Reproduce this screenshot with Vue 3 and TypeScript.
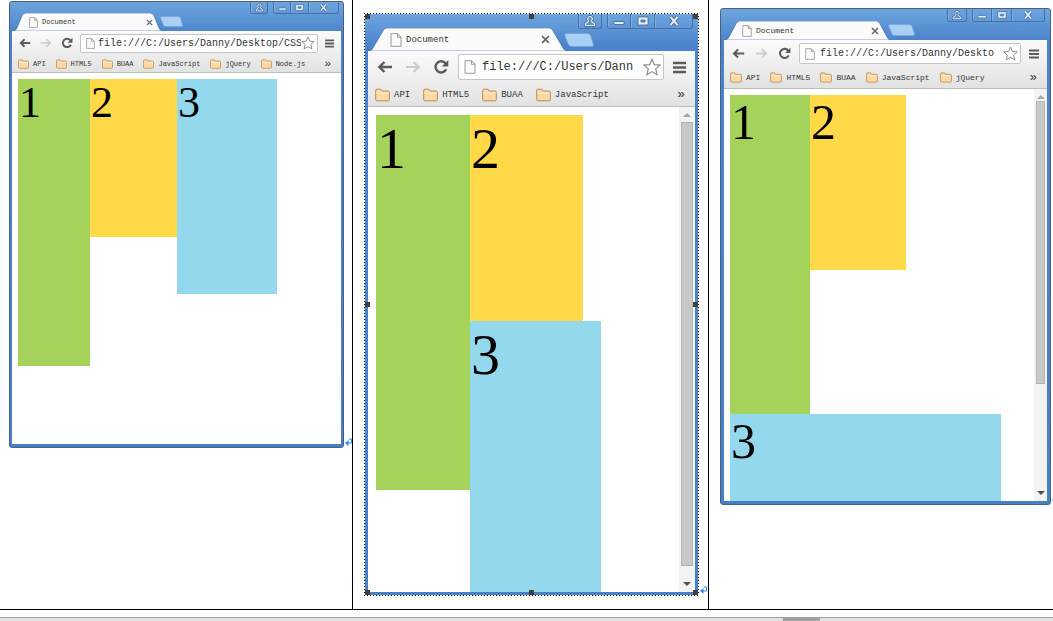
<script setup lang="ts">
interface FloatBox {
  label: string
  tone: 'green' | 'yellow' | 'blue'
}

interface BrowserWindow {
  id: string
  size: 'small' | 'large' | 'medium'
  url: string
  bookmarks: string[]
  selected: boolean
  scroll: boolean
  tabWidth: number
  tabHeight: number
  slant: number
}

const boxes: FloatBox[] = [
  { label: '1', tone: 'green' },
  { label: '2', tone: 'yellow' },
  { label: '3', tone: 'blue' },
]

const windows: BrowserWindow[] = [
  {
    id: 'wide',
    size: 'small',
    url: 'file:///C:/Users/Danny/Desktop/CSS',
    bookmarks: ['API', 'HTML5', 'BUAA', 'JavaScript', 'jQuery', 'Node.js'],
    selected: false,
    scroll: false,
    tabWidth: 152,
    tabHeight: 18,
    slant: 11,
  },
  {
    id: 'narrow',
    size: 'large',
    url: 'file:///C:/Users/Dann',
    bookmarks: ['API', 'HTML5', 'BUAA', 'JavaScript'],
    selected: true,
    scroll: true,
    tabWidth: 200,
    tabHeight: 23,
    slant: 16,
  },
  {
    id: 'dropped',
    size: 'medium',
    url: 'file:///C:/Users/Danny/Deskto',
    bookmarks: ['API', 'HTML5', 'BUAA', 'JavaScript', 'jQuery'],
    selected: false,
    scroll: true,
    tabWidth: 168,
    tabHeight: 19,
    slant: 13,
  },
]

const handles = ['nw', 'n', 'ne', 'w', 'e', 'sw', 's', 'se']

function tabPath(w: number, h: number, s: number): string {
  return `M0 ${h}Q4 ${h} 5 ${h - 3}L${s - 1} 3Q${s} 0 ${s + 3} 0H${w - s - 3}Q${w - s} 0 ${w - s + 1} 3L${w - 5} ${h - 3}Q${w - 4} ${h} ${w} ${h}Z`
}
</script>

<template>
  <main class="page">
    <div class="row">
      <section v-for="win in windows" :key="win.id" class="cell" :class="win.size">
        <div class="frame" :class="{ selected: win.selected }">
          <article class="window">
            <header class="titlebar">
              <div class="tab">
                <svg
                  class="tab-shape"
                  :viewBox="`0 0 ${win.tabWidth} ${win.tabHeight}`"
                  preserveAspectRatio="none"
                  aria-hidden="true"
                >
                  <path :d="tabPath(win.tabWidth, win.tabHeight, win.slant)" fill="#fbfbfb" stroke="#3c6ca8" stroke-width="0.6" />
                </svg>
                <svg class="page-icon" viewBox="0 0 12 14" aria-hidden="true">
                  <path d="M1 .7H7.5L11 4.2V13.3H1ZM7.5.7V4.2H11" fill="#fafafa" stroke="#999" />
                </svg>
                <span class="tab-title">Document</span>
                <button class="tab-close" type="button" aria-label="Close tab">
                  <svg viewBox="0 0 8 8"><path d="M1 1L7 7M7 1L1 7" stroke="#666" stroke-width="1.5" /></svg>
                </button>
              </div>
              <button class="new-tab" type="button" aria-label="New tab">
                <svg viewBox="0 0 28 13" preserveAspectRatio="none">
                  <path d="M2 .5H22Q24 .5 25 2.500L27.500 11Q28 12.500 26 12.500H7Q5 12.500 4 10.500L.6 2Q.2.5 2 .5Z" fill="#a9cff5" stroke="#79a5d6" stroke-width="0.8" />
                </svg>
              </button>
              <div class="controls">
                <button class="ctl user" type="button" aria-label="User">
                  <svg viewBox="0 0 12 12">
                    <path d="M6 1.500a2.300 2.300 0 0 1 1.600 4L8 7L10.500 8.500V10.500H1.500V8.500L4 7L4.400 5.500A2.300 2.300 0 0 1 6 1.500Z" fill="none" stroke="#3b5f8c" stroke-width="2.400" />
                    <path d="M6 1.500a2.300 2.300 0 0 1 1.600 4L8 7L10.500 8.500V10.500H1.500V8.500L4 7L4.400 5.500A2.300 2.300 0 0 1 6 1.500Z" fill="#5f8cc2" stroke="#e6f0fb" stroke-width="1.200" />
                  </svg>
                </button>
                <div class="group">
                  <button class="ctl" type="button" aria-label="Minimize">
                    <svg viewBox="0 0 12 12"><rect x="1" y="6.500" width="10" height="3" rx="0.500" fill="#e6f0fb" stroke="#3b5f8c" stroke-width="0.800" /></svg>
                  </button>
                  <button class="ctl" type="button" aria-label="Maximize">
                    <svg viewBox="0 0 12 12"><path d="M1 2H11V10H1ZM4 5V7H8V5Z" fill="#e6f0fb" fill-rule="evenodd" stroke="#3b5f8c" stroke-width="0.800" /></svg>
                  </button>
                  <button class="ctl close" type="button" aria-label="Close">
                    <svg viewBox="0 0 12 12">
                      <path d="M2.500 2L9.500 10M9.500 2L2.500 10" stroke="#3b5f8c" stroke-width="3.600" />
                      <path d="M2.500 2L9.500 10M9.500 2L2.500 10" stroke="#e6f0fb" stroke-width="2" />
                    </svg>
                  </button>
                </div>
              </div>
            </header>

            <div class="chrome">
              <div class="toolbar">
                <nav class="nav">
                  <button type="button" aria-label="Back">
                    <svg viewBox="0 0 16 16"><path d="M15 8H2.500M7.500 3L2.300 8L7.500 13" fill="none" stroke="#5c5c5c" stroke-width="2.400" /></svg>
                  </button>
                  <button type="button" aria-label="Forward">
                    <svg viewBox="0 0 16 16"><path d="M1 8H13.500M8.500 3L13.700 8L8.500 13" fill="none" stroke="#cbcbcb" stroke-width="2.200" /></svg>
                  </button>
                  <button type="button" aria-label="Reload">
                    <svg viewBox="0 0 16 16">
                      <path d="M12.600 4.500A5.600 5.600 0 1 0 13.200 10.300" fill="none" stroke="#5c5c5c" stroke-width="2.500" />
                      <path d="M15.300 1V7.500H8.800Z" fill="#5c5c5c" />
                    </svg>
                  </button>
                </nav>
                <div class="omnibox">
                  <svg class="page-icon" viewBox="0 0 12 14" aria-hidden="true">
                    <path d="M1 .7H7.500L11 4.200V13.300H1ZM7.500.7V4.200H11" fill="#fafafa" stroke="#999" />
                  </svg>
                  <input type="text" :value="win.url" aria-label="Address" spellcheck="false" />
                  <button class="star" type="button" aria-label="Bookmark this page">
                    <svg viewBox="0 0 18 18"><path d="M9 1.200L11.300 6.600L17 7.100L12.700 10.900L14 16.700L9 13.600L4 16.700L5.300 10.900L1 7.100L6.700 6.600Z" fill="#fff" stroke="#8c8c8c" stroke-width="1.200" /></svg>
                  </button>
                </div>
                <button class="menu" type="button" aria-label="Menu">
                  <svg viewBox="0 0 12 12" preserveAspectRatio="none"><path d="M0 1.800H12M0 6H12M0 10.200H12" stroke="#5c5c5c" stroke-width="2.400" /></svg>
                </button>
              </div>
              <nav class="bookmarks">
                <a v-for="name in win.bookmarks" :key="name" href="#" class="bookmark">
                  <svg viewBox="0 0 15 13" aria-hidden="true">
                    <path d="M.7 2Q.7.7 2 .7H5.500Q6.500.7 6.700 2L7 2.500H13Q14.300 2.500 14.300 4V11Q14.300 12.300 13 12.300H2Q.7 12.300.7 11Z" fill="#fbd9a4" stroke="#b98a55" />
                    <path d="M1.500 4.500H13.500" stroke="#fff0d2" />
                  </svg>
                  <span>{{ name }}</span>
                </a>
                <button class="more" type="button" aria-label="More bookmarks">»</button>
              </nav>
            </div>

            <div class="viewport">
              <div class="content">
                <div v-for="box in boxes" :key="box.label" class="box" :class="box.tone">{{ box.label }}</div>
              </div>
              <div v-if="win.scroll" class="scrollbar" aria-hidden="true">
                <svg viewBox="0 0 8 8"><path d="M0 6L4 2L8 6Z" fill="#a6a6a6" /></svg>
                <div class="thumb"></div>
                <svg viewBox="0 0 8 8"><path d="M0 2L4 6L8 2Z" fill="#505050" /></svg>
              </div>
            </div>
          </article>
          <template v-if="win.selected">
            <i v-for="h in handles" :key="h" class="handle" :class="h"></i>
          </template>
        </div>
        <svg class="return" viewBox="0 0 7 8" aria-hidden="true">
          <path d="M4 1H6.500V5H2" fill="none" stroke="#2b8be8" />
          <path d="M0 5L3.500 2V8Z" fill="#2b8be8" />
        </svg>
      </section>
    </div>
    <div class="hscroll" aria-hidden="true"><div class="hthumb"></div></div>
  </main>
</template>

<style>
body {
  background: #fff;
}
</style>

<style scoped>
* {
  box-sizing: border-box;
}

.page {
  display: flex;
  flex-direction: column;
  min-height: 100vh;
  overflow: hidden;
  font-family: "Liberation Mono", monospace;
  color: #333;
}

.page svg {
  display: block;
}

button {
  display: flex;
  align-items: center;
  justify-content: center;
  margin: 0;
  padding: 0;
  border: 0;
  background: none;
  font: inherit;
  color: inherit;
}

.row {
  flex: 1;
  display: grid;
  grid-template-columns: 353fr 356fr 344fr;
  align-items: stretch;
  border-bottom: 1px solid #000;
}

.cell {
  display: grid;
  grid-template-columns: 1fr auto;
  align-content: start;
  min-width: 0;
  border-right: 1px solid #000;
}

.cell:last-child {
  border-right: 0;
}

.small {
  --title: 29px;
  --tab-h: 18px;
  --tab-w: 152px;
  --tab-pad: 16px;
  --tab-end: 11px;
  --font: 7px;
  --url-font: 10px;
  --url-pad: 2px;
  --icon: 12px;
  --page: 11px;
  --nav-gap: 9px;
  --toolbar: 24px;
  --omni: 19px;
  --bar: 17px;
  --folder: 11px;
  --item-gap: 10px;
  --ctl-h: 12px;
  --ctl-w: 18px;
  --close-w: 30px;
  --digit: 44px;
  --pad: 6px;
  --view: 371px;
  --new-w: 23px;
  --new-h: 11px;
  --side: 2px;
  --edge: 7px;
  padding: 1px 0 0 9px;
}

.large {
  --title: 37px;
  --tab-h: 23px;
  --tab-w: 200px;
  --tab-pad: 21px;
  --tab-end: 18px;
  --font: 9px;
  --url-font: 12px;
  --url-pad: 5px;
  --icon: 16px;
  --page: 14px;
  --nav-gap: 12px;
  --toolbar: 32px;
  --omni: 26px;
  --bar: 23px;
  --folder: 15px;
  --item-gap: 13px;
  --ctl-h: 15px;
  --ctl-w: 24px;
  --close-w: 38px;
  --digit: 58px;
  --pad: 8px;
  --view: 485px;
  --new-w: 30px;
  --new-h: 14px;
  --side: 3px;
  --edge: 9px;
  padding: 13px 1px 0 11px;
}

.medium {
  --title: 31px;
  --tab-h: 19px;
  --tab-w: 168px;
  --tab-pad: 17px;
  --tab-end: 13px;
  --font: 8px;
  --url-font: 10px;
  --url-pad: 4px;
  --icon: 13px;
  --page: 12px;
  --nav-gap: 10px;
  --toolbar: 27px;
  --omni: 21px;
  --bar: 21px;
  --folder: 12px;
  --item-gap: 10px;
  --ctl-h: 13px;
  --ctl-w: 20px;
  --close-w: 33px;
  --digit: 50px;
  --pad: 6px;
  --view: 412px;
  --new-w: 27px;
  --new-h: 12px;
  --side: 3px;
  --edge: 8px;
  padding: 8px 0 0 11px;
}

.frame {
  position: relative;
  min-width: 0;
}

.frame.selected {
  padding: 1px;
  background:
    repeating-linear-gradient(90deg, #000 0 1px, #fff 1px 3px) top / 100% 1px no-repeat,
    repeating-linear-gradient(90deg, #000 0 1px, #fff 1px 3px) bottom / 100% 1px no-repeat,
    repeating-linear-gradient(#000 0 1px, #fff 1px 3px) left / 1px 100% no-repeat,
    repeating-linear-gradient(#000 0 1px, #fff 1px 3px) right / 1px 100% no-repeat;
}

.window {
  border: 1px solid #4a5f7c;
  border-radius: 3px;
  padding: 0 var(--side) 3px;
  background: linear-gradient(#6ea5df, #4a83cb 32px, #4680c6);
}

.selected .window {
  border: 0;
  border-radius: 0;
}

.titlebar {
  position: relative;
  display: flex;
  align-items: flex-end;
  height: var(--title);
}

.tab {
  position: relative;
  flex: none;
  display: flex;
  align-items: center;
  width: var(--tab-w);
  height: var(--tab-h);
  padding: 0 var(--tab-end) 0 var(--tab-pad);
}

.tab-shape {
  position: absolute;
  inset: 0;
  width: 100%;
  height: 100%;
}

.page-icon {
  position: relative;
  flex: none;
  width: var(--page);
  height: var(--page);
}

.tab-title {
  position: relative;
  flex: 1;
  margin-left: 3px;
  font-size: var(--font);
}

.tab-close {
  position: relative;
}

.tab-close svg {
  width: var(--font);
  height: var(--font);
}

.new-tab {
  margin: 0 0 4px -4px;
}

.new-tab svg {
  width: var(--new-w);
  height: var(--new-h);
}

.controls {
  position: absolute;
  top: 0;
  right: 2px;
  display: flex;
  gap: 5px;
}

.group {
  display: flex;
}

.ctl {
  width: var(--ctl-w);
  height: var(--ctl-h);
  border: 1px solid #4671a8;
  border-top: 0;
  border-left-width: 0;
  box-shadow: inset 1px 0 #83b0e2;
}

.ctl svg {
  width: calc(var(--ctl-h) - 3px);
  height: calc(var(--ctl-h) - 3px);
}

.user {
  border-left-width: 1px;
  border-radius: 0 0 3px 3px;
}

.group .ctl:first-child {
  border-left-width: 1px;
  border-radius: 0 0 0 3px;
}

.close {
  width: var(--close-w);
  border-radius: 0 0 3px;
}

.chrome {
  border-bottom: 1px solid #bdbdbd;
  background: linear-gradient(#fbfbfb, #e2e2e2);
}

.toolbar {
  display: flex;
  align-items: center;
  height: var(--toolbar);
  padding: 0 var(--edge);
}

.nav {
  display: flex;
  gap: var(--nav-gap);
}

.nav svg {
  width: var(--icon);
  height: var(--icon);
}

.omnibox {
  flex: 1;
  display: flex;
  align-items: center;
  min-width: 0;
  height: var(--omni);
  margin: 0 var(--edge);
  padding: 0 2px 0 4px;
  border: 1px solid #c6c6c6;
  border-radius: 2px;
  background: #fff;
}

.omnibox input {
  flex: 1;
  min-width: 0;
  height: 100%;
  margin: 0;
  padding: 0 0 0 var(--url-pad);
  border: 0;
  outline: 0;
  background: none;
  font: var(--url-font) "Liberation Mono", monospace;
  color: #333;
}

.star svg {
  width: calc(var(--icon) + 2px);
  height: calc(var(--icon) + 2px);
}

.menu svg {
  width: calc(var(--icon) - 3px);
  height: calc(var(--icon) - 3px);
}

.bookmarks {
  display: flex;
  align-items: center;
  gap: var(--item-gap);
  height: var(--bar);
  padding: 0 10px 0 6px;
  font-size: var(--font);
}

.large .bookmarks {
  padding-left: 7px;
}

.bookmark {
  display: flex;
  align-items: center;
  gap: 4px;
  color: #333;
  text-decoration: none;
}

.bookmark svg {
  width: var(--folder);
  height: calc(var(--folder) - 1px);
}

.more {
  margin-left: auto;
  font-size: calc(var(--font) + 4px);
}

.viewport {
  display: flex;
  height: var(--view);
  background: #fff;
}

.content {
  flex: 1;
  min-width: 0;
  overflow: hidden;
  padding: var(--pad);
}

.box {
  float: left;
  padding: 0 1px;
  font: var(--digit) / 1.1 "Liberation Serif", serif;
  color: #000;
}

.large .box {
  padding-top: 2px;
}

.green {
  background: #a5d25a;
}

.yellow {
  background: #ffd948;
}

.blue {
  background: #94d8ed;
}

.small .green {
  width: 72px;
  height: 287px;
}

.small .yellow {
  width: 87px;
  height: 158px;
}

.small .blue {
  width: 100px;
  height: 215px;
}

.large .green {
  width: 94px;
  height: 375px;
}

.large .yellow {
  width: 113px;
  height: 206px;
}

.large .blue {
  width: 131px;
  height: 275px;
}

.medium .green {
  width: 80px;
  height: 319px;
}

.medium .yellow {
  width: 96px;
  height: 175px;
}

.medium .blue {
  width: 271px;
  height: 240px;
}

.scrollbar {
  display: flex;
  flex-direction: column;
  align-items: center;
  flex: none;
  width: var(--icon);
  padding: 4px 0;
  background: #f3f3f3;
}

.scrollbar svg {
  width: 8px;
  height: 8px;
}

.thumb {
  align-self: stretch;
  margin: 3px 2px auto;
  border: 1px solid #b5b5b5;
  background: #c8c8c8;
}

.medium .thumb {
  margin-top: 0;
}

.large .thumb {
  height: 93%;
}

.medium .thumb {
  height: 70%;
}

.handle {
  position: absolute;
  width: 5px;
  height: 5px;
  background: #404040;
}

.nw,
.n,
.ne {
  top: 1px;
}

.sw,
.s,
.se {
  bottom: 1px;
}

.w,
.e {
  top: 50%;
  margin-top: -3px;
}

.nw,
.w,
.sw {
  left: 1px;
}

.ne,
.e,
.se {
  right: 1px;
}

.n,
.s {
  left: 50%;
  margin-left: -3px;
}

.return {
  align-self: end;
  width: 7px;
  height: 8px;
  margin: 0 0 2px 1px;
}

.medium .return {
  margin-right: -6px;
}

.hscroll {
  display: grid;
  grid-template-columns: 783fr 37fr 233fr;
  height: 4px;
  margin-top: 7px;
  border-top: 1px solid #a0a0a0;
  background: #e1e1e1;
}

.hthumb {
  grid-column: 2;
  background: #a0a0a0;
}
</style>
